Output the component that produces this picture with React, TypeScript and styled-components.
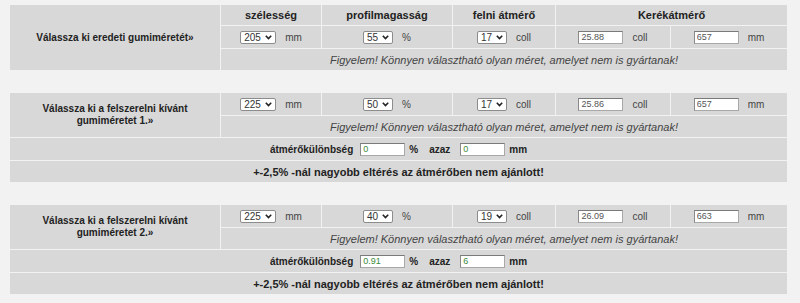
import React from "react";
import styled, { createGlobalStyle } from "styled-components";

const GlobalStyle = createGlobalStyle`
  body {
    margin: 0;
    background: #f2f2f2;
    font-family: "Liberation Sans", Arial, sans-serif;
    color: #222;
  }
`;

const Page = styled.div`
  display: flex;
  flex-direction: column;
  gap: 21px;
  padding: 4px 0 0 9px;
`;

const Table = styled.table`
  width: 779px;
  table-layout: fixed;
  border-collapse: separate;
  border-spacing: 1px;
`;

const Cell = styled.td<{ $h?: number }>`
  background: #d8d8d8;
  height: ${(p) => p.$h ?? 22}px;
  padding: 0;
  text-align: center;
  vertical-align: middle;
`;

const HeadCell = styled.th`
  background: #d8d8d8;
  height: 20px;
  padding: 0;
  font-size: 11px;
  font-weight: bold;
  color: #222;
  text-align: center;
  vertical-align: middle;
`;

const Label = styled.td`
  background: #d8d8d8;
  padding: 0 6px;
  font-size: 10px;
  font-weight: bold;
  line-height: 12px;
  color: #222;
  text-align: center;
  vertical-align: middle;
`;

const Field = styled.div`
  display: flex;
  align-items: center;
  justify-content: center;
  gap: 9px;
  font-size: 10px;
  line-height: 13px;
`;

const Unit = styled.span`
  font-size: 10px;
  color: #444;
`;

const Warning = styled.div`
  font-size: 11px;
  font-style: italic;
  color: #444;
`;

const Note = styled.div`
  font-size: 11px;
  font-weight: bold;
  color: #222;
`;

const DiffLine = styled.div`
  display: flex;
  align-items: center;
  justify-content: center;
  font-size: 10px;
  line-height: 13px;
  font-weight: bold;
  color: #222;
`;

const Gap = styled.span<{ $w: number }>`
  display: inline-block;
  width: ${(p) => p.$w}px;
`;

const SelectWrap = styled.span<{ $w: number }>`
  position: relative;
  display: block;
  width: ${(p) => p.$w}px;
  height: 13px;
`;

const Select = styled.select`
  appearance: none;
  display: block;
  width: 100%;
  height: 13px;
  box-sizing: border-box;
  margin: 0;
  padding: 0 0 0 3px;
  border: 1px solid #8c8c8c;
  border-radius: 2px;
  background: #fff;
  font-family: "Liberation Sans", Arial, sans-serif;
  font-size: 10px;
  color: #333;
  outline: none;
`;

const Chevron = styled.svg`
  position: absolute;
  right: 4px;
  top: 4px;
  pointer-events: none;
`;

const TextBox = styled.input<{ $green?: boolean }>`
  display: block;
  width: 45px;
  height: 13px;
  box-sizing: border-box;
  margin: 0;
  padding: 0 2px;
  border: 1px solid #a8a8a8;
  border-top-color: #7a7a7a;
  border-left-color: #8a8a8a;
  background: #fff;
  font-family: "Liberation Sans", Arial, sans-serif;
  font-size: 9px;
  color: ${(p) => (p.$green ? "#3c8a3c" : "#555")};
  outline: none;
`;

function Drop({ value, width }: { value: string; width: number }) {
  return (
    <SelectWrap $w={width}>
      <Select defaultValue={value}>
        <option value={value}>{value}</option>
      </Select>
      <Chevron width="7" height="5" viewBox="0 0 7 5">
        <path d="M0.8 0.8 L3.5 3.6 L6.2 0.8" fill="none" stroke="#222" strokeWidth="1.6" />
      </Chevron>
    </SelectWrap>
  );
}

function Cols() {
  return (
    <colgroup>
      <col style={{ width: 210 }} />
      <col style={{ width: 100 }} />
      <col style={{ width: 130 }} />
      <col style={{ width: 102 }} />
      <col style={{ width: 114 }} />
      <col style={{ width: 116 }} />
    </colgroup>
  );
}

type Size = {
  width: string;
  profile: string;
  rim: string;
  inch: string;
  mm: string;
};

function InputCells({ size }: { size: Size }) {
  return (
    <>
      <Cell>
        <Field>
          <Drop value={size.width} width={36} />
          <Unit>mm</Unit>
        </Field>
      </Cell>
      <Cell>
        <Field>
          <Drop value={size.profile} width={30} />
          <Unit>%</Unit>
        </Field>
      </Cell>
      <Cell>
        <Field>
          <Drop value={size.rim} width={30} />
          <Unit>coll</Unit>
        </Field>
      </Cell>
      <Cell>
        <Field>
          <TextBox readOnly value={size.inch} />
          <Unit>coll</Unit>
        </Field>
      </Cell>
      <Cell>
        <Field>
          <TextBox readOnly value={size.mm} />
          <Unit>mm</Unit>
        </Field>
      </Cell>
    </>
  );
}

const WARNING = "Figyelem! Könnyen választható olyan méret, amelyet nem is gyártanak!";

function OriginalSize({ size }: { size: Size }) {
  return (
    <Table>
      <Cols />
      <tbody>
        <tr>
          <Label rowSpan={3}>Válassza ki eredeti gumiméretét»</Label>
          <HeadCell>szélesség</HeadCell>
          <HeadCell>profilmagasság</HeadCell>
          <HeadCell>felni átmérő</HeadCell>
          <HeadCell colSpan={2}>Kerékátmérő</HeadCell>
        </tr>
        <tr>
          <InputCells size={size} />
        </tr>
        <tr>
          <Cell $h={21} colSpan={5}>
            <Warning>{WARNING}</Warning>
          </Cell>
        </tr>
      </tbody>
    </Table>
  );
}

function NewSize({ n, size, pct, mm }: { n: number; size: Size; pct: string; mm: string }) {
  return (
    <Table>
      <Cols />
      <tbody>
        <tr>
          <Label rowSpan={2}>
            Válassza ki a felszerelni kívánt
            <br />
            gumiméretet {n}.»
          </Label>
          <InputCells size={size} />
        </tr>
        <tr>
          <Cell $h={21} colSpan={5}>
            <Warning>{WARNING}</Warning>
          </Cell>
        </tr>
        <tr>
          <Cell colSpan={6}>
            <DiffLine>
              átmérőkülönbség
              <Gap $w={7} />
              <TextBox $green readOnly value={pct} />
              <Gap $w={4} />%<Gap $w={11} />
              azaz
              <Gap $w={10} />
              <TextBox $green readOnly value={mm} />
              <Gap $w={4} />
              mm
            </DiffLine>
          </Cell>
        </tr>
        <tr>
          <Cell $h={21} colSpan={6}>
            <Note>+-2,5% -nál nagyobb eltérés az átmérőben nem ajánlott!</Note>
          </Cell>
        </tr>
      </tbody>
    </Table>
  );
}

export default function App() {
  return (
    <>
      <GlobalStyle />
      <Page>
        <OriginalSize size={{ width: "205", profile: "55", rim: "17", inch: "25.88", mm: "657" }} />
        <NewSize
          n={1}
          size={{ width: "225", profile: "50", rim: "17", inch: "25.86", mm: "657" }}
          pct="0"
          mm="0"
        />
        <NewSize
          n={2}
          size={{ width: "225", profile: "40", rim: "19", inch: "26.09", mm: "663" }}
          pct="0.91"
          mm="6"
        />
      </Page>
    </>
  );
}
